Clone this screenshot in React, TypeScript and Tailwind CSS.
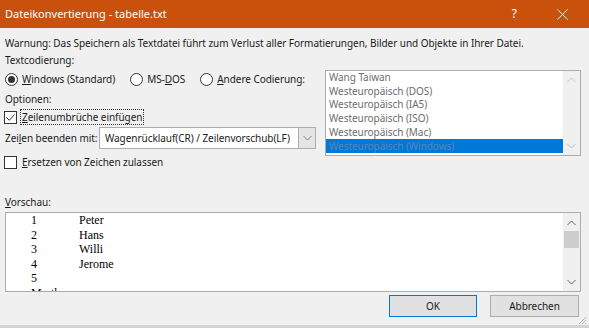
const ui = { fontFamily: '"Noto Sans", "Open Sans", sans-serif' };

const encodings = [
  "Wang Taiwan",
  "Westeuropäisch (DOS)",
  "Westeuropäisch (IA5)",
  "Westeuropäisch (ISO)",
  "Westeuropäisch (Mac)",
  "Westeuropäisch (Windows)",
];

const preview = [
  ["1", "Peter"],
  ["2", "Hans"],
  ["3", "Willi"],
  ["4", "Jerome"],
  ["5", ""],
  ["Marth", ""],
];

const Chevron = ({ up, color = "#606060" }: { up?: boolean; color?: string }) => (
  <svg width="9" height="6" viewBox="0 0 9 6">
    <path
      d={up ? "M0.5 5 L4.5 1 L8.5 5" : "M0.5 1 L4.5 5 L8.5 1"}
      fill="none"
      stroke={color}
      strokeWidth="1"
    />
  </svg>
);

const Radio = ({ checked }: { checked?: boolean }) => (
  <span className="flex h-[13px] w-[13px] items-center justify-center rounded-full border border-[#333333] bg-white">
    {checked && <span className="h-[7px] w-[7px] rounded-full bg-[#333333]" />}
  </span>
);

const Check = ({ checked }: { checked?: boolean }) => (
  <span className="flex h-[13px] w-[13px] items-center justify-center border border-[#333333] bg-white">
    {checked && (
      <svg width="11" height="11" viewBox="0 0 11 11">
        <path d="M1.5 5.5 L4.3 8.3 L9.5 2.5" fill="none" stroke="#333333" strokeWidth="1" />
      </svg>
    )}
  </span>
);

export default function App() {
  return (
    <div
      className="relative flex h-[328px] w-[589px] flex-col overflow-hidden whitespace-nowrap bg-[#f0f0f0] text-[10px] tracking-[-0.05px] text-[#1a1a1a]"
      style={ui}
    >
      {/* title bar */}
      <div className="flex h-[28px] shrink-0 items-center bg-[#c9510c] pl-[5px] text-[11px] tracking-normal text-white">
        <span>Dateikonvertierung - tabelle.txt</span>
        <span className="ml-auto mr-[40px] text-[12px]">?</span>
        <svg className="mr-[21px]" width="11" height="11" viewBox="0 0 11 11">
          <path d="M0.5 0.5 L10.5 10.5 M10.5 0.5 L0.5 10.5" stroke="white" strokeWidth="1" />
        </svg>
      </div>

      <div className="flex flex-1 flex-col px-[5px]">
        <p className="mt-[7px] h-[16px] leading-[16px]">
          Warnung: Das Speichern als Textdatei führt zum Verlust aller Formatierungen, Bilder und Objekte in Ihrer Datei.
        </p>
        <p className="mt-[1px] h-[16px] leading-[16px]">Textcodierung:</p>

        <div className="mt-[2px] flex">
          {/* left column */}
          <div className="flex w-[320px] flex-col">
            <div className="mt-[1px] flex h-[16px] items-center">
              <Radio checked />
              <span className="ml-[4px]"><u>W</u>indows (Standard)</span>
              <span className="ml-[15px]"><Radio /></span>
              <span className="ml-[4px]">MS-<u>D</u>OS</span>
              <span className="ml-[15px]"><Radio /></span>
              <span className="ml-[4px]"><u>A</u>ndere Codierung:</span>
            </div>
            <p className="mt-[4px] h-[16px] leading-[16px]">Optionen:</p>
            <div className="mt-[2px] flex h-[16px] items-center">
              <span className="-ml-[1px]"><Check checked /></span>
              <span className="ml-[3px] border border-dotted border-[#333333] px-[1px] leading-[14px]">
                <u>Z</u>eilenumbrüche einfügen
              </span>
            </div>
            <div className="mt-[2px] flex h-[22px] items-center">
              <span className="w-[94px]">
                Zei<u>l</u>en beenden mit:
              </span>
              <div className="flex h-[22px] w-[217px] items-center border border-[#adadad] bg-white">
                <span className="flex-1 pl-[5px]">Wagenrücklauf(CR) / Zeilenvorschub(LF)</span>
                <span className="flex h-full w-[17px] items-center justify-center border-l border-[#adadad] bg-[#e5e5e5]">
                  <Chevron color="#808080" />
                </span>
              </div>
            </div>
            <div className="mt-[5px] flex h-[16px] items-center">
              <span className="-ml-[1px]"><Check /></span>
              <span className="ml-[5px]">
                <u>E</u>rsetzen von Zeichen zulassen
              </span>
            </div>
          </div>

          {/* encoding list */}
          <div className="ml-auto mr-[3px] flex h-[86px] w-[256px] border border-[#abadb3] bg-white">
            <div className="flex flex-1 flex-col text-[#6d6d6d]">
              {encodings.map((e, i) => (
                <div
                  key={e}
                  className={
                    i === encodings.length - 1
                      ? "h-[14px] bg-[#0078d7] pl-[3px] leading-[14px] text-[#5b86b8]"
                      : "h-[13.7px] pl-[3px] leading-[13.7px]"
                  }
                >
                  {e}
                </div>
              ))}
            </div>
            <div className="flex w-[17px] flex-col items-center justify-between bg-[#f0f0f0] py-[6px]">
              <Chevron up color="#c0c0c0" />
              <Chevron color="#c0c0c0" />
            </div>
          </div>
        </div>

        <p className="mt-[24px] h-[16px] leading-[16px]">
          <u>V</u>orschau:
        </p>

        {/* preview */}
        <div className="mr-[3px] mt-[2px] flex h-[80px] border border-[#adadad] bg-white">
          <div className="flex-1 overflow-hidden text-[12px] tracking-normal text-black" style={{ fontFamily: '"Liberation Serif", serif' }}>
            {preview.map(([n, name]) => (
              <div key={n} className="flex h-[14.5px] leading-[14.5px]">
                <span className="w-[73px] pl-[25px]">{n}</span>
                <span>{name}</span>
              </div>
            ))}
          </div>
          <div className="flex w-[17px] flex-col items-center bg-[#f0f0f0]">
            <div className="mt-[7px]"><Chevron up /></div>
            <div className="mt-[5px] h-[17px] w-[15px] bg-[#cdcdcd]" />
            <div className="mt-auto mb-[6px]"><Chevron /></div>
          </div>
        </div>

        {/* buttons */}
        <div className="mr-[5px] mt-[3px] flex justify-end gap-[13px]">
          <button className="h-[22px] w-[88px] border border-[#0078d7] bg-[#e1e1e1] text-[10px]">OK</button>
          <button className="h-[22px] w-[89px] border border-[#adadad] bg-[#e1e1e1] text-[10px]">Abbrechen</button>
        </div>
      </div>

      <div className="h-[3px] shrink-0 bg-[#d4d4d4]" />
      <svg className="absolute bottom-[3px] right-[2px]" width="10" height="10" viewBox="0 0 10 10">
        <path d="M9 2 L2 9 M9 5 L5 9 M9 8 L8 9" stroke="#b5b5b5" strokeWidth="1" />
      </svg>
    </div>
  );
}
